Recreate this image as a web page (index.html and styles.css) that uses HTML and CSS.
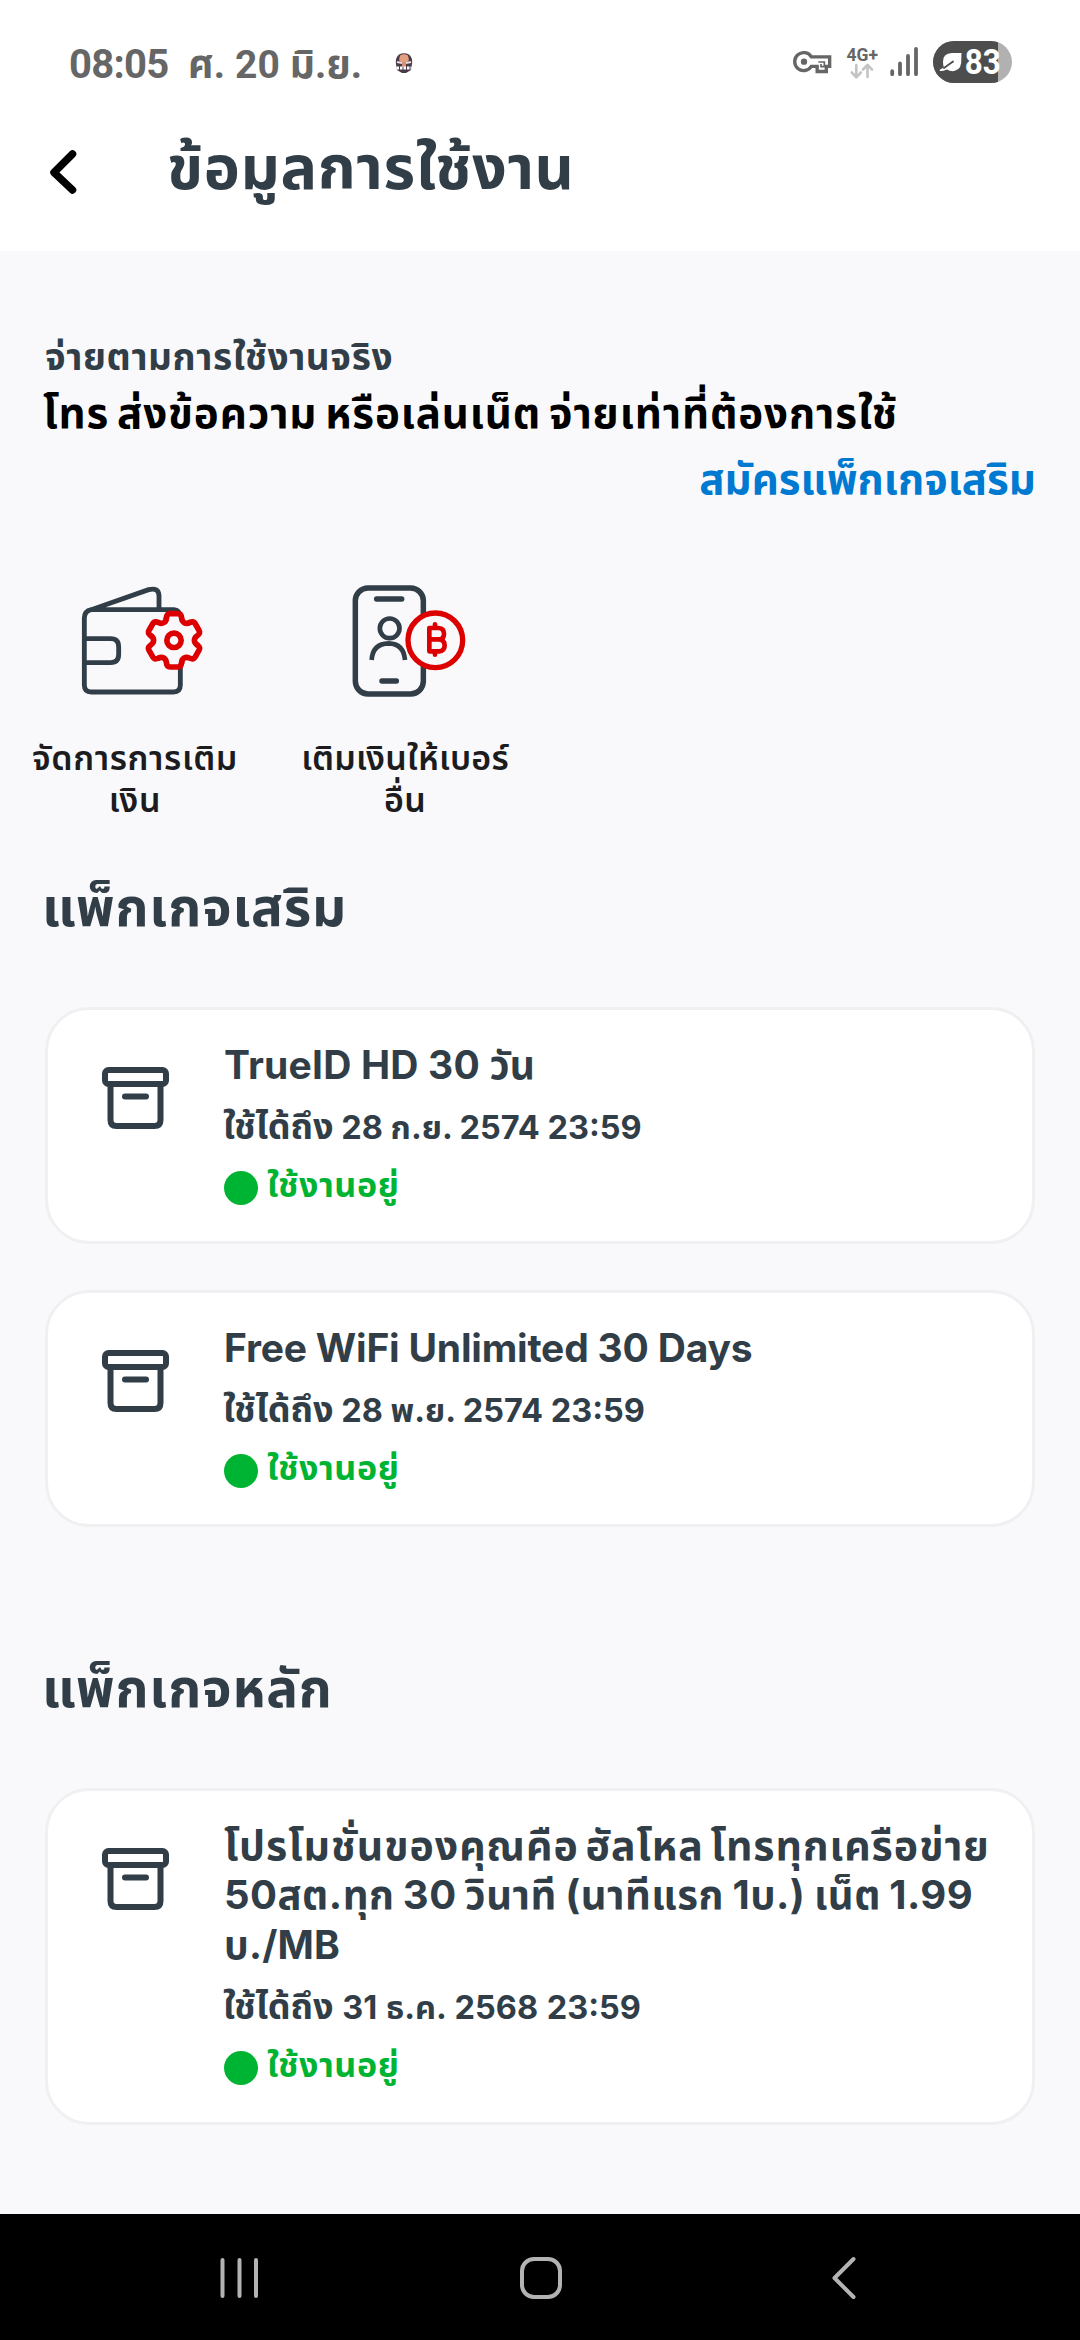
FILE: index.html
```html
<!DOCTYPE html>
<html lang="th">
<head>
<meta charset="utf-8">
<title>ข้อมูลการใช้งาน</title>
<link rel="stylesheet" href="styles.css">
</head>
<body>
<svg class="defs" width="0" height="0" aria-hidden="true">
  <symbol id="box" viewBox="0 0 67 62">
    <g fill="none" stroke="#313e48" stroke-width="6">
      <rect x="3" y="3" width="61" height="14" rx="3.5"/>
      <path d="M8.5 17V53Q8.5 59 14.500 59H52.500Q58.500 59 58.500 53V17"/>
      <path d="M23 29.500H44" stroke-linecap="round"/>
    </g>
  </symbol>
</svg>
<div class="screen">
  <header class="top">
    <div class="status">
      <span class="clock">08:05</span>
      <span class="date">ศ. 20 มิ.ย.</span>
      <svg class="notif" width="18" height="21" viewBox="0 0 18 21">
        <path d="M4 1.500Q9-1 14 1.500Q18 5 17 11L16 17L11 20H7L2 17L1 11Q0 5 4 1.500Z" fill="#4a3a48"/>
        <path d="M5 2.500Q9 0 13 2.500L14 7L12 9H6L4 7Z" fill="#e2a080"/>
        <path d="M2 9L7 10M16 9L11 10" stroke="#e8dfe2" stroke-width="2"/>
        <path d="M7 9H11V14H7Z" fill="#d88f74"/>
        <path d="M1.500 15H16.500" stroke="#fff" stroke-width="3" stroke-dasharray="2.500 1"/>
      </svg>
      <div class="tray">
        <svg width="39" height="42" viewBox="36 33 117 126">
          <path fill="none" stroke="#666" stroke-width="10" d="M91 80.500A27 27 0 1 0 91 109H108.500V124.500H136V109H146V80.500Z"/>
          <circle cx="69" cy="95" r="9.500" fill="#666"/>
          <path d="M112 96H130V110H120V102" fill="none" stroke="#666" stroke-width="5"/>
        </svg>
        <svg width="32" height="42" viewBox="845 41 32 42">
          <text class="net" x="845.500" y="60.700" textLength="31.500" lengthAdjust="spacingAndGlyphs">4G+</text>
          <path d="M855.300 65V77M850.800 72.500L855.300 77.300L859.800 72.500M866.500 77V65.500M862 69.500L866.500 65L871 69.500" fill="none" stroke="#c4c4c4" stroke-width="2.600" stroke-linecap="round" stroke-linejoin="round"/>
        </svg>
        <svg width="29" height="42" viewBox="889 41 29 42">
          <path d="M891.200 71.200V74.200M899 63.500V74.200M907 56V74.200M915 49V74.200" stroke="#666" stroke-width="3.800" stroke-linecap="round"/>
        </svg>
        <svg width="79" height="42" viewBox="0 0 79 42">
          <defs><clipPath id="pill"><rect width="79" height="42" rx="21"/></clipPath></defs>
          <g clip-path="url(#pill)"><rect width="79" height="42" fill="#b1b1b1"/><rect width="65" height="42" fill="#4d4d4d"/></g>
          <path d="M28.500 12H19Q9.500 12.500 10 21Q10 25 11 26.500L7.500 28.200Q6 29 7 30Q9 30.500 14 28.500Q18 31 22 29.800Q29 28 28.300 18Z" fill="#fff"/>
          <path d="M11 27L20 20.500" stroke="#4d4d4d" stroke-width="1.800" fill="none" stroke-linecap="round"/>
          <text class="pct" x="31.800" y="33.400" textLength="36" lengthAdjust="spacingAndGlyphs">83</text>
        </svg>
      </div>
    </div>
    <div class="titlebar">
      <svg class="back" width="28" height="46" viewBox="0 0 28 46"><path d="M23.500 5L5 23.500L23.500 41" fill="none" stroke="#000" stroke-width="7.500" stroke-linecap="round" stroke-linejoin="round"/></svg>
      <h1>ข้อมูลการใช้งาน</h1>
    </div>
  </header>
  <main>
    <p class="plan">จ่ายตามการใช้งานจริง</p>
    <p class="plan-detail">โทร ส่งข้อความ หรือเล่นเน็ต จ่ายเท่าที่ต้องการใช้</p>
    <a class="buy">สมัครแพ็กเกจเสริม</a>
    <div class="tiles">
      <div class="tile">
        <svg width="150" height="130" viewBox="-30 0 450 390">
          <defs><path id="tooth" d="M-23-66C-22-76-18-80-12-80L12-80C18-80 22-76 23-66C24-54 35-47.500 45.700-52.900"/></defs>
          <g fill="none" stroke="#313e48" stroke-width="14.500">
            <path d="M60 104H312Q331 106 331 128V330Q331 351 310 351H64Q43 351 43 330V130Q43 108 64 104L236 44Q266 36 267 62V104"/>
            <path d="M43 191H122Q146 191 146 216V238Q146 263 122 263H43"/>
          </g>
          <g transform="translate(312 196)" fill="none" stroke="#dc0000" stroke-width="17" stroke-linecap="round">
            <path d="M-23-66C-22-76-18-80-12-80L12-80C18-80 22-76 23-66C30-48 35-47.500 45.700-52.900Q70-64 73-40Q80-30 61-13V13Q80 30 73 45Q60 60 46 53Q24 48 23 66Q22 80 12 80H-12Q-22 80-23 66Q-30 48-46 53Q-66 58-75 30L-57 0L-75-30Q-66-58-46-53Q-30-48-23-66Z" stroke="none" fill="#f9f9fb"/>
            <use href="#tooth"/><use href="#tooth" transform="rotate(60)"/><use href="#tooth" transform="rotate(120)"/><use href="#tooth" transform="rotate(180)"/><use href="#tooth" transform="rotate(240)"/><use href="#tooth" transform="rotate(300)"/>
            <circle r="21.500"/>
          </g>
        </svg>
        <span class="l1">จัดการการเติม<br>เงิน</span>
      </div>
      <div class="tile">
        <svg width="150" height="130" viewBox="-30 0 450 390">
          <g fill="none" stroke="#313e48" stroke-width="16.500">
            <rect x="46" y="39" width="204" height="318" rx="38"/>
            <path d="M110 72H185M126 318H169" stroke-linecap="round"/>
            <g stroke-width="14"><circle cx="149" cy="160" r="29.500"/><path d="M95 255Q98 206 146 205Q191 206 195 255"/></g>
          </g>
          <g fill="none" stroke="#dc0000" stroke-width="16">
            <circle cx="286" cy="196" r="82" fill="#f9f9fb"/>
            <path stroke-width="14" stroke-linejoin="round" d="M268 159H296Q312 160 312 176Q312 193 296 193Q314 194 314 212Q313 228 298 229H268ZM270 193H298"/>
            <path stroke-width="14" stroke-linecap="round" d="M285 148V157M285 230V239"/>
          </g>
        </svg>
        <span class="l2">เติมเงินให้เบอร์<br>อื่น</span>
      </div>
    </div>
    <h2>แพ็กเกจเสริม</h2>
    <section class="card">
      <svg class="pkg" width="67" height="62"><use href="#box"/></svg>
      <div class="info">
        <h3>TrueID HD 30 วัน</h3>
        <p class="until"><b>ใช้ได้ถึง</b> 28 ก.ย. 2574 23:59</p>
        <p class="state"><i></i>ใช้งานอยู่</p>
      </div>
    </section>
    <section class="card next">
      <svg class="pkg" width="67" height="62"><use href="#box"/></svg>
      <div class="info">
        <h3 class="latin">Free WiFi Unlimited 30 Days</h3>
        <p class="until"><b>ใช้ได้ถึง</b> 28 พ.ย. 2574 23:59</p>
        <p class="state"><i></i>ใช้งานอยู่</p>
      </div>
    </section>
    <h2 class="main-pack">แพ็กเกจหลัก</h2>
    <section class="card promo">
      <svg class="pkg" width="67" height="62"><use href="#box"/></svg>
      <div class="info">
        <h3><span class="p1">โปรโมชั่นของคุณคือ ฮัลโหล โทรทุกเครือข่าย</span><span class="p2">50สต.ทุก 30 วินาที (นาทีแรก 1บ.) เน็ต 1.99</span><span>บ./MB</span></h3>
        <p class="until"><b>ใช้ได้ถึง</b> 31 ธ.ค. 2568 23:59</p>
        <p class="state"><i></i>ใช้งานอยู่</p>
      </div>
    </section>
  </main>
  <nav>
    <svg width="40" height="44" viewBox="0 0 40 44"><path d="M2.500 4V40M19.500 4V40M36 4V40" stroke="#b3b3b3" stroke-width="4" stroke-linecap="round"/></svg>
    <svg class="home" width="44" height="44" viewBox="0 0 44 44"><rect x="3" y="3" width="38" height="38" rx="12" fill="none" stroke="#b3b3b3" stroke-width="4"/></svg>
    <svg width="26" height="44" viewBox="0 0 26 44"><path d="M22.500 3L3.500 22L22.500 41" fill="none" stroke="#b3b3b3" stroke-width="4" stroke-linecap="round" stroke-linejoin="round"/></svg>
  </nav>
</div>
</body>
</html>
```
FILE: styles.css
```css
* { box-sizing: border-box; margin: 0; padding: 0; }
body { width: 1080px; background: #fff; font-family: Inter, "Noto Sans Thai", "Noto Sans", sans-serif; font-weight: 700; color: #313e48; }
svg { display: block; flex: none; }
.defs { position: absolute; }
.screen { width: 1080px; height: 2340px; display: flex; flex-direction: column; overflow: hidden; white-space: nowrap; }

.top { height: 251px; background: #fff; }
.status { height: 124px; padding: 0 68px 0 69px; display: flex; align-items: center; color: #666; font-family: Roboto, "Noto Sans Thai", sans-serif; font-size: 40px; line-height: 48px; }
.clock { width: 119px; padding-top: 6px; letter-spacing: -0.7px; }
.date { width: 207px; padding-top: 6px; font-size: 39px; letter-spacing: .1px; }
.notif { margin-top: 2px; }
.tray { margin-left: auto; display: flex; align-items: center; }
.tray svg:nth-child(2) { margin-left: 14px; }
.tray svg:nth-child(3) { margin-left: 12px; }
.tray svg:nth-child(4) { margin-left: 14px; }
.net { font: 700 17.500px Roboto, sans-serif; fill: #666; }
.pct { font: 700 35px Roboto, sans-serif; fill: #fff; }
.titlebar { display: flex; align-items: flex-start; padding-left: 49px; }
.back { margin-top: 25px; }
h1 { margin-left: 90px; font-size: 61px; line-height: 86px; letter-spacing: .6px; }

main { flex: 1; background: #f9f9fb; padding: 79px 45px 0; display: flex; flex-direction: column; }
.plan { font-size: 37px; line-height: 54px; letter-spacing: .6px; }
.plan-detail { margin-left: -2px; font-size: 42px; line-height: 57px; letter-spacing: .9px; word-spacing: -3px; color: #000; }
.buy { align-self: flex-end; margin-right: -1px; font-size: 42px; line-height: 76px; color: #007ad0; }
.tiles { display: flex; margin: 58px 0 0 -45px; }
.tile { width: 270px; display: flex; flex-direction: column; align-items: center; gap: 32px; text-align: center; font-size: 34px; font-weight: 600; line-height: 42px; color: #1c1c1e; }
.l1 { letter-spacing: .6px; }
.l2 { letter-spacing: .2px; }
h2 { margin: 46px 0 60px -3px; font-size: 53px; line-height: 80px; letter-spacing: .8px; }
.main-pack { margin-top: 121px; }

.card { display: flex; padding: 30px 20px 31px 54px; border: 3px solid #f0f0f2; border-radius: 44px; background: #fff; }
.next { margin-top: 46px; }
.pkg { margin-top: 27px; }
.info { margin-left: 55px; }
h3 { font-size: 39px; line-height: 50px; letter-spacing: .2px; }
h3 span { display: block; }
.promo { padding-bottom: 32px; }
.promo h3 { margin-top: -1px; }
.latin { letter-spacing: -.2px; }
h3 .p1 { font-size: 41px; letter-spacing: 1px; word-spacing: -4px; }
h3 .p2 { font-size: 40px; letter-spacing: .5px; word-spacing: -1.500px; }
.until { margin: 13px 0 7px -1px; font-size: 32.500px; line-height: 50px; }
.promo .until { word-spacing: 1px; }
.until b { font-size: 36px; font-weight: 700; line-height: 1; }
.state { display: flex; align-items: center; gap: 9px; font-size: 34px; line-height: 50px; letter-spacing: .6px; color: #00b433; }
.state i { width: 34px; height: 34px; margin-top: 6px; border-radius: 50%; background: #00b433; }

nav { height: 126px; background: #000; display: flex; align-items: center; justify-content: space-between; padding: 2px 223px 0 220px; }
.home { margin-right: 9px; }
```
